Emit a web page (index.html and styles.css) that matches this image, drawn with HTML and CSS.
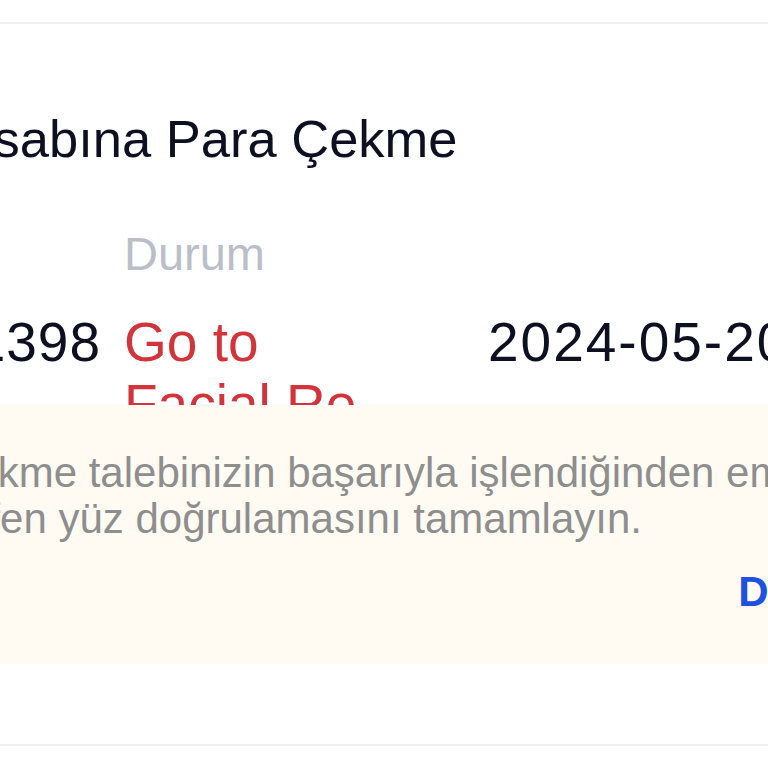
FILE: index.html
```html
<!DOCTYPE html>
<html lang="tr">
<head>
<meta charset="utf-8">
<title>Para Çekme</title>
<link rel="stylesheet" href="styles.css">
</head>
<body>
<div class="screen">
  <section class="card">
    <h2 class="card-title">Banka Hesabına Para Çekme</h2>
    <div class="grid">
      <div class="label">Sipariş No</div>
      <div class="label">Durum</div>
      <div class="label"></div>
      <div class="value order-no">7162041398</div>
      <div class="value status">Go to Facial Re-verification</div>
      <div class="value date">2024-05-20 14:32:18</div>
    </div>
  </section>
  <div class="toast">
    <p class="toast-text">Çekme talebinizin başarıyla işlendiğinden emin olmak için lütfen yüz doğrulamasını tamamlayın.</p>
    <div class="toast-actions"><span class="toast-link">Doğrula</span></div>
  </div>
</div>
</body>
</html>
```

FILE: styles.css
```css
html, body {
  margin: 0;
  padding: 0;
  background: #ffffff;
}
body {
  width: 768px;
  height: 768px;
  overflow: hidden;
  font-family: "Liberation Sans", Arial, sans-serif;
}
.screen {
  position: relative;
  margin-left: -237px;
  width: 1500px;
  padding-top: 22px;
}
.card {
  box-sizing: border-box;
  height: 724px;
  border-top: 2px solid #eff0f3;
  border-bottom: 2px solid #eff0f3;
  padding-top: 85px;
  background: #ffffff;
}
.card-title {
  margin: 0;
  font-size: 52.5px;
  line-height: 60px;
  font-weight: 400;
  color: #0d1020;
  white-space: nowrap;
}
.grid {
  margin-top: 57px;
  display: grid;
  grid-template-columns: 338px 341px max-content;
  column-gap: 23px;
  row-gap: 29px;
}
.label {
  font-size: 47px;
  line-height: 56px;
  color: #babec8;
  white-space: nowrap;
}
.value {
  font-size: 55px;
  line-height: 62px;
  color: #0d1020;
}
.order-no {
  text-align: right;
  letter-spacing: 1px;
  white-space: nowrap;
}
.status {
  color: #d2343b;
  padding-right: 81px;
}
.date {
  white-space: nowrap;
  letter-spacing: 2px;
}
.toast {
  position: absolute;
  top: 405px;
  left: 157px;
  width: 1100px;
  padding: 45px 36px 49px 24px;
  background: #fffbf3;
}
.toast-text {
  margin: 0;
  font-size: 42px;
  line-height: 46px;
  color: #8e8e8e;
}
.toast-actions {
  margin-top: 27px;
  display: flex;
  justify-content: flex-end;
  padding-right: 147px;
}
.toast-link {
  font-size: 42px;
  line-height: 46px;
  font-weight: 700;
  color: #2050e0;
  white-space: nowrap;
}
```
